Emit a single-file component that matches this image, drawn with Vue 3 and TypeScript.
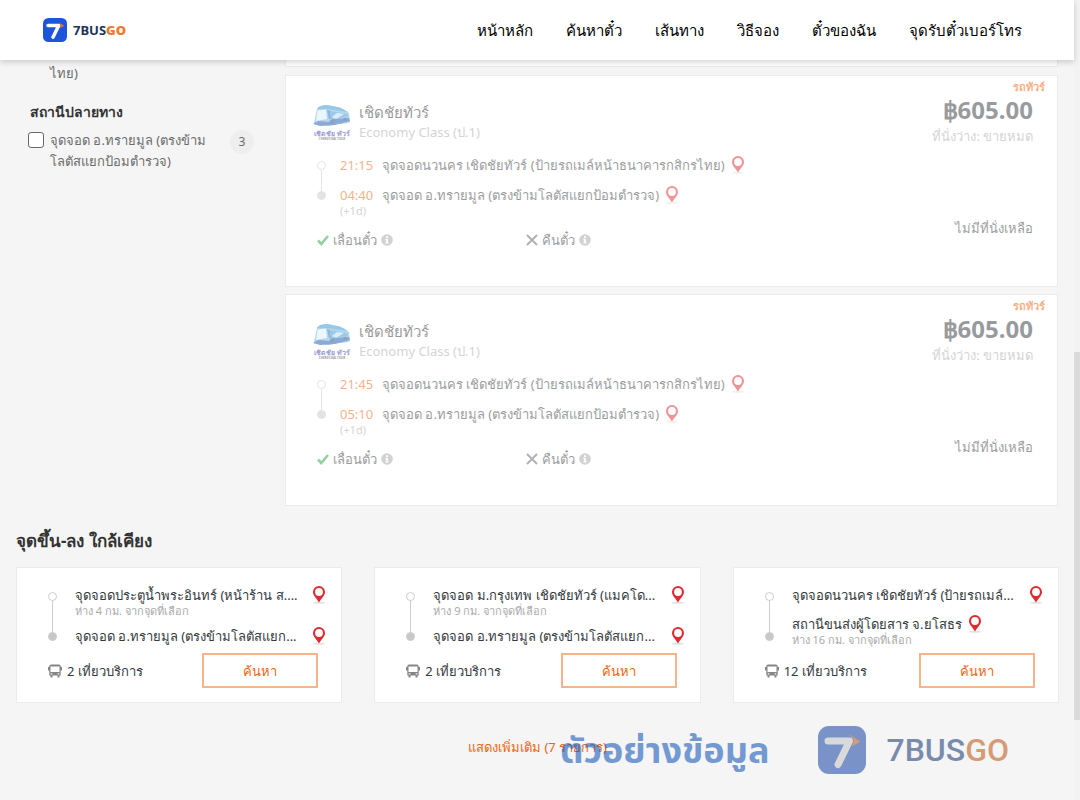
<script setup lang="ts">
interface Trip {
  id: number
  depart: string
  arrive: string
}
interface Nearby {
  id: number
  from: string
  fromNote: string
  to: string
  toNote: string
  trips: number
}

const menu: string[] = ['หน้าหลัก', 'ค้นหาตั๋ว', 'เส้นทาง', 'วิธีจอง', 'ตั๋วของฉัน', 'จุดรับตั๋วเบอร์โทร']

const trips: Trip[] = [
  { id: 1, depart: '21:15', arrive: '04:40' },
  { id: 2, depart: '21:45', arrive: '05:10' },
]

const nearby: Nearby[] = [
  {
    id: 1,
    from: 'จุดจอดประตูน้ำพระอินทร์ (หน้าร้าน ส....',
    fromNote: 'ห่าง 4 กม. จากจุดที่เลือก',
    to: 'จุดจอด อ.ทรายมูล (ตรงข้ามโลตัสแยก...',
    toNote: '',
    trips: 2,
  },
  {
    id: 2,
    from: 'จุดจอด ม.กรุงเทพ เชิดชัยทัวร์ (แมคโด...',
    fromNote: 'ห่าง 9 กม. จากจุดที่เลือก',
    to: 'จุดจอด อ.ทรายมูล (ตรงข้ามโลตัสแยก...',
    toNote: '',
    trips: 2,
  },
  {
    id: 3,
    from: 'จุดจอดนวนคร เชิดชัยทัวร์ (ป้ายรถเมล์...',
    fromNote: '',
    to: 'สถานีขนส่งผู้โดยสาร จ.ยโสธร',
    toNote: 'ห่าง 16 กม. จากจุดที่เลือก',
    trips: 12,
  },
]
</script>

<template>
  <div class="page">
    <svg class="defs" aria-hidden="true">
      <symbol id="pin" viewBox="0 0 14 18">
        <ellipse cx="7" cy="16.8" rx="6" ry="1" fill="#e2e2e2" />
        <path d="M7 0A6 6 0 0 0 1 6C1 10 5 12.500 7 16.600 9 12.500 13 10 13 6A6 6 0 0 0 7 0Z" fill="#de2b2f" />
        <circle cx="7" cy="6" r="3.900" fill="#fff" />
      </symbol>
      <symbol id="info" viewBox="0 0 12 12">
        <circle cx="6" cy="6" r="5.800" fill="#a6a6a6" />
        <circle cx="6" cy="3.200" r="1.100" fill="#fff" />
        <path d="M4.400 5h2.500v3.400h.9v1.200H4.300V8.400h.9V6.200h-.8Z" fill="#fff" />
      </symbol>
      <symbol id="brand" viewBox="0 0 48 48">
        <rect class="brand-bg" width="48" height="48" rx="11" />
        <path class="brand-seven" d="M10 15H31.500L20 38.500" fill="none" stroke-width="7" stroke-linecap="round" stroke-linejoin="round" />
        <path class="brand-arrow" d="M30.500 8 42.500 15.500 34 20.500 36 14Z" />
      </symbol>
    </svg>

    <div class="view">
      <header class="top">
        <a class="brand" href="#">
          <svg class="brand-icon"><use href="#brand" /></svg>
          <span class="brand-name">7BUS<b>GO</b></span>
        </a>
        <nav class="menu">
          <a v-for="m in menu" :key="m" href="#">{{ m }}</a>
        </nav>
      </header>

      <div class="columns">
        <aside class="filters">
          <p class="previous">ไทย)</p>
          <h3>สถานีปลายทาง</h3>
          <div class="option">
            <input id="dest" type="checkbox" />
            <label for="dest">จุดจอด อ.ทรายมูล (ตรงข้าม<br />โลตัสแยกป้อมตำรวจ)</label>
            <span class="count">3</span>
          </div>
        </aside>

        <main class="results">
          <div class="trip tail"></div>
          <article v-for="t in trips" :key="t.id" class="trip">
            <div class="faded">
              <div class="left">
                <div class="operator">
                  <svg class="coach" viewBox="0 0 38 38">
                    <path d="M1 19 4 5Q5 2 12 1.500 20 1 30 5L36 9 37 18Q33 20 24 20L16 22 1 20Z" fill="#6bb0e0" />
                    <path d="M4 5Q6 1 14 1L27 3.500 35 8 17 5.500Z" fill="#2f93d3" />
                    <path d="M4.500 6.500 13 5.500 14 15 3 17Z" fill="#d9f0fb" />
                    <path d="M14 6 16 15 18 15 17 7Z" fill="#1f6fb8" />
                    <path d="M17 7 34 10 35 13 18 15Z" fill="#3d95d3" />
                    <path d="M19 13 24 9 31 10 23 15Z" fill="#b7dff5" />
                    <path d="M0 20 5 17 16 18 20 15 36 14 37 17 22 21 7 22Z" fill="#1c57a8" />
                    <circle cx="19" cy="17.500" r="2.200" fill="#174a90" />
                    <circle cx="32" cy="15.500" r="1.800" fill="#174a90" />
                    <text x="19" y="32" text-anchor="middle" font-size="7" font-weight="700" fill="#3a3aa5">เชิดชัย ทัวร์</text>
                    <text x="19" y="36" text-anchor="middle" font-size="3" font-weight="700" fill="#333">CHERDCHAI TOUR</text>
                  </svg>
                  <div>
                    <h4>เชิดชัยทัวร์</h4>
                    <p>Economy Class (ป.1)</p>
                  </div>
                </div>
                <div class="route">
                  <div class="track"><i></i><s></s><i class="end"></i></div>
                  <div class="stops">
                    <div class="stop">
                      <time>{{ t.depart }}</time>
                      <span>จุดจอดนวนคร เชิดชัยทัวร์ (ป้ายรถเมล์หน้าธนาคารกสิกรไทย)</span>
                      <svg class="pin"><use href="#pin" /></svg>
                    </div>
                    <div class="stop">
                      <time>{{ t.arrive }}</time>
                      <span>จุดจอด อ.ทรายมูล (ตรงข้ามโลตัสแยกป้อมตำรวจ)</span>
                      <svg class="pin"><use href="#pin" /></svg>
                    </div>
                    <small>(+1d)</small>
                  </div>
                </div>
                <div class="policies">
                  <div class="policy">
                    <svg class="mark" viewBox="0 0 12 12"><path d="M1 6.500 4.300 10 11 2" fill="none" stroke="#28a745" stroke-width="2.600" /></svg>
                    <span>เลื่อนตั๋ว</span>
                    <svg class="info"><use href="#info" /></svg>
                  </div>
                  <div class="policy">
                    <svg class="mark" viewBox="0 0 12 12"><path d="M1 1 11 11M11 1 1 11" fill="none" stroke="#666" stroke-width="2" /></svg>
                    <span>คืนตั๋ว</span>
                    <svg class="info"><use href="#info" /></svg>
                  </div>
                </div>
              </div>
              <div class="right">
                <span class="tag">รถทัวร์</span>
                <strong>฿605.00</strong>
                <span class="seats">ที่นั่งว่าง: ขายหมด</span>
                <span class="none">ไม่มีที่นั่งเหลือ</span>
              </div>
            </div>
          </article>
        </main>
      </div>

      <section class="nearby">
        <h2>จุดขึ้น-ลง ใกล้เคียง</h2>
        <div class="cards">
          <article v-for="n in nearby" :key="n.id" class="card">
            <div class="pair">
              <div class="track"><i></i><s></s><i class="end"></i></div>
              <div class="places">
                <div class="place">
                  <div class="line spread"><span>{{ n.from }}</span><svg class="pin"><use href="#pin" /></svg></div>
                  <small v-if="n.fromNote">{{ n.fromNote }}</small>
                </div>
                <div class="place">
                  <div class="line" :class="{ spread: !n.toNote }"><span>{{ n.to }}</span><svg class="pin"><use href="#pin" /></svg></div>
                  <small v-if="n.toNote">{{ n.toNote }}</small>
                </div>
              </div>
            </div>
            <div class="action">
              <svg class="bus" viewBox="0 0 14 14">
                <path fill="#858585" fill-rule="evenodd" d="M3 .5H11Q12.500 .5 12.700 2V3H14V6.500H12.700V11.500H11.500V13.500H9.500V11.500H4.500V13.500H2.500V11.500H1.300V6.500H0V3H1.300V2Q1.500 .5 3 .5ZM2.500 2.500V8H11.500V2.500ZM2.700 9.300V10.400H4.300V9.300ZM9.700 9.300V10.400H11.300V9.300Z" />
              </svg>
              <span>{{ n.trips }} เที่ยวบริการ</span>
              <button type="button">ค้นหา</button>
            </div>
          </article>
        </div>
        <a class="more" href="#">แสดงเพิ่มเติม (7 รายการ)</a>
      </section>
    </div>

    <div class="scroll"><div class="thumb"></div></div>

    <div class="watermark">
      <span class="sample">ตัวอย่างข้อมูล</span>
      <svg class="wm-icon"><use href="#brand" /></svg>
      <span class="wm-name">7BUS<b>GO</b></span>
    </div>
  </div>
</template>

<style>
body {
  margin: 0;
  background: #f5f5f5;
}
</style>

<style scoped>
* {
  box-sizing: border-box;
}
.page {
  --brand-bg: #1d54dc;
  --brand-seven: #fff;
  --brand-arrow: #f2701d;
  position: relative;
  display: flex;
  min-height: 100vh;
  overflow: hidden;
  background: #f5f5f5;
  color: #343a40;
  font: 13px/20px "Noto Sans", sans-serif;
}
.defs {
  position: absolute;
  width: 0;
  height: 0;
}
.brand-bg {
  fill: var(--brand-bg);
}
.brand-seven {
  stroke: var(--brand-seven);
}
.brand-arrow {
  fill: var(--brand-arrow);
}
h2, h3, h4, p {
  margin: 0;
}
a {
  text-decoration: none;
}
svg {
  display: block;
  flex: none;
}
.view {
  flex: 1;
  min-width: 0;
}
.top {
  position: relative;
  z-index: 2;
  display: flex;
  align-items: center;
  justify-content: space-between;
  height: 60px;
  padding: 0 52px 0 43px;
  background: #fff;
  box-shadow: 0 2px 6px rgba(0, 0, 0, 0.18);
}
.brand {
  display: flex;
  align-items: center;
  gap: 6px;
}
.brand-icon {
  width: 24px;
  height: 24px;
}
.brand-name {
  color: #1c335c;
  font-size: 13px;
  font-weight: 700;
}
.brand-name b {
  color: #f0792a;
}
.menu {
  display: flex;
  gap: 33px;
}
.menu a {
  color: #000;
  font-size: 15px;
  white-space: nowrap;
}
.columns {
  display: grid;
  grid-template-columns: 269px minmax(0, 1fr);
  padding: 0 16px;
}
.filters {
  padding: 3px 31px 0 12px;
  color: #6c6c6c;
}
.previous {
  padding-left: 22px;
}
.filters h3 {
  margin: 19px 0 8px 2px;
  color: #333;
  font-size: 14px;
  font-weight: 700;
}
.option {
  display: flex;
  align-items: flex-start;
  line-height: 21px;
  white-space: nowrap;
}
.option input {
  appearance: none;
  width: 16px;
  height: 16px;
  margin: 2px 6px 0 0;
  border: 1px solid #666;
  border-radius: 3px;
  background: #fff;
}
.count {
  width: 24px;
  height: 24px;
  margin: 0 0 0 auto;
  border-radius: 50%;
  background: #eee;
  font-size: 12px;
  line-height: 24px;
  text-align: center;
}
.trip {
  height: 212px;
  margin-bottom: 7px;
  border: 1px solid #e9ecec;
  background: #fff;
}
.tail {
  height: 7px;
  margin-bottom: 8px;
  border-top: 0;
}
.faded {
  display: flex;
  justify-content: space-between;
  opacity: 0.5;
}
.left {
  padding: 26px 0 0 27px;
}
.operator {
  display: flex;
  gap: 8px;
}
.coach {
  width: 38px;
  height: 38px;
  margin-top: 2px;
}
.operator h4 {
  color: #333;
  font-size: 15px;
  font-weight: 500;
}
.operator p {
  color: #aaa;
  font-size: 13px;
  line-height: 20px;
}
.route {
  display: flex;
  gap: 14px;
  margin-top: 13px;
  padding-left: 4px;
}
.track {
  display: flex;
  flex-direction: column;
  align-items: center;
  width: 9px;
  height: 39px;
  margin-top: 6px;
}
.track i {
  width: 9px;
  height: 9px;
  border: 1px solid #ccc;
  border-radius: 50%;
  background: #fff;
}
.track .end {
  background: #c8c8c8;
}
.track s {
  flex: 1;
  width: 1px;
  background: #ccc;
}
.stop {
  display: flex;
  align-items: center;
  height: 20px;
  margin-bottom: 10px;
  white-space: nowrap;
}
.stop time {
  width: 42px;
  color: #f0650e;
}
.stop + .stop {
  margin-bottom: 0;
}
.pin {
  width: 14px;
  height: 18px;
  margin-left: 6px;
}
small {
  display: block;
  color: #aaa;
  font-size: 11px;
  line-height: 12px;
}
.policies {
  display: flex;
  margin-top: 13px;
}
.policy {
  display: flex;
  align-items: center;
  gap: 4px;
  width: 209px;
  padding-left: 4px;
}
.mark, .info {
  width: 12px;
  height: 12px;
}
.right {
  display: flex;
  flex-direction: column;
  align-items: flex-end;
  padding: 4px 24px 0 0;
  white-space: nowrap;
}
.tag {
  margin-right: -12px;
  color: #f0650e;
  font-size: 11px;
  font-weight: 700;
  line-height: 14px;
}
.right strong {
  font-size: 24px;
  line-height: 32px;
}
.seats {
  color: #aaa;
}
.none {
  margin-top: 72px;
}
.nearby {
  padding: 12px 15px 0 16px;
}
.nearby h2 {
  color: #333;
  font-size: 17px;
  font-weight: 700;
  line-height: 32px;
}
.cards {
  display: grid;
  grid-template-columns: repeat(3, minmax(0, 1fr));
  gap: 32px;
  margin-top: 10px;
}
.card {
  height: 136px;
  padding: 17px 15px 0 31px;
  border: 1px solid #e9ecec;
  background: #fff;
}
.pair {
  display: flex;
  gap: 18px;
  height: 68px;
}
.pair .track {
  height: 49px;
  margin-top: 7px;
}
.places {
  display: flex;
  flex: 1;
  flex-direction: column;
  gap: 9px;
  min-width: 0;
}
.line {
  display: flex;
  align-items: center;
  height: 20px;
  white-space: nowrap;
}
.spread {
  justify-content: space-between;
}
.action {
  display: flex;
  align-items: center;
  gap: 5px;
  padding-right: 8px;
}
.bus {
  width: 14px;
  height: 14px;
}
.action button {
  width: 116px;
  height: 35px;
  margin-left: auto;
  padding: 0;
  border: 2px solid #f5b48a;
  background: #fff;
  color: #f0650e;
  font: inherit;
}
.more {
  display: block;
  margin-top: 34px;
  color: #f0650e;
  text-align: center;
}
.scroll {
  width: 6px;
  background: #f3f3f3;
}
.thumb {
  height: 46vh;
  margin-top: 44vh;
  background: #dadada;
}
.watermark {
  --brand-bg: #214ca7;
  --brand-seven: #c6c6c6;
  --brand-arrow: #c05a18;
  position: absolute;
  right: 71px;
  bottom: 24px;
  z-index: 3;
  display: flex;
  align-items: center;
  height: 52px;
  opacity: 0.58;
}
.sample {
  margin-right: 49px;
  color: #1658bb;
  font: 700 36px/52px "Noto Sans", "Noto Sans Thai", sans-serif;
}
.wm-icon {
  width: 48px;
  height: 48px;
  margin-right: 20px;
}
.wm-name {
  color: #214078;
  font: 500 32px/52px Roboto, sans-serif;
}
.wm-name b {
  color: #c05a18;
  font-weight: 500;
}
</style>
